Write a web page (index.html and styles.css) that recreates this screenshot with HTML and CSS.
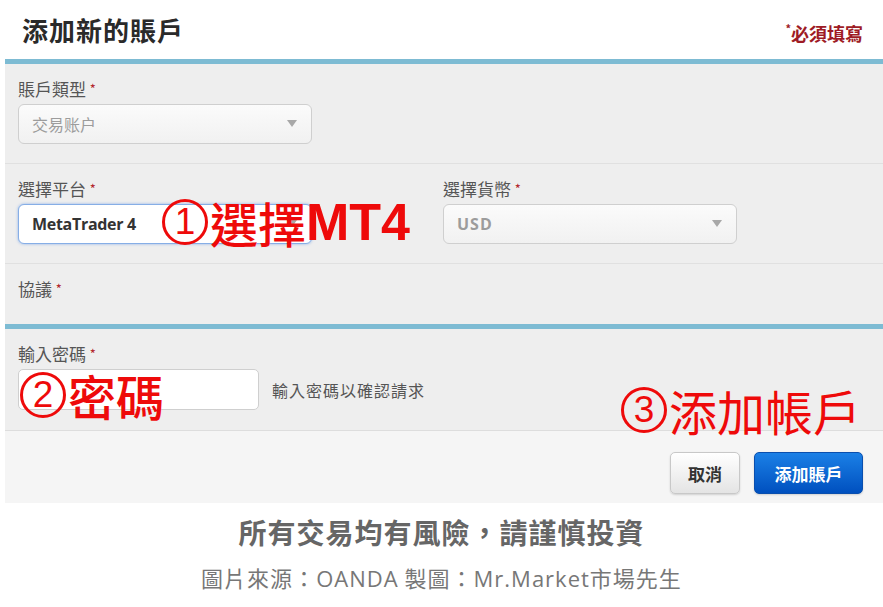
FILE: index.html
```html
<!DOCTYPE html>
<html lang="zh-Hant">
<head>
  <meta charset="UTF-8">
  <title>添加新的賬戶</title>
  <meta name="viewport" content="width=device-width, initial-scale=1.0"/>
  <link rel="stylesheet" href="styles.css">
</head>
<body>

  <div class="modal">
    <div class="modal-header">
      <h2>添加新的賬戶</h2>
      <span class="required-note"><span class="star">*</span>必須填寫</span>
    </div>

    <div class="modal-body">
      <div class="section">
        <label>賬戶類型 <span class="req">*</span></label>
        <div class="select disabled">交易账户<span class="caret"></span></div>
      </div>

      <div class="section cols">
        <div>
          <label>選擇平台 <span class="req">*</span></label>
          <div class="select focus">MetaTrader 4<span class="caret"></span></div>
        </div>
        <div>
          <label>選擇貨幣 <span class="req">*</span></label>
          <div class="select disabled latin">USD<span class="caret"></span></div>
        </div>
      </div>

      <div class="section last">
        <label>協議 <span class="req">*</span></label>
      </div>
    </div>

    <div class="modal-body pw">
      <div class="section last">
        <label>輸入密碼 <span class="req">*</span></label>
        <div class="pw-row">
          <input type="password" class="pw-input">
          <span class="help">輸入密碼以確認請求</span>
        </div>
      </div>
    </div>

    <div class="modal-footer">
      <button class="btn">取消</button>
      <button class="btn primary">添加賬戶</button>
    </div>
  </div>

  <div class="caption">
    <p class="warn">所有交易均有風險，請謹慎投資</p>
    <p class="source">圖片來源：<span class="en">OANDA</span> 製圖：<span class="en">Mr.Market</span>市場先生</p>
  </div>

  <!-- red hand-drawn annotations over the form -->
  <div class="note n1"><span class="circ">1</span>選擇<b>MT4</b></div>
  <div class="note n2"><span class="circ">2</span>密碼</div>
  <div class="note n3"><span class="circ">3</span>添加帳戶</div>

</body>
</html>
```

FILE: styles.css
```css
body {
  margin: 0;
  background: #fff;
  color: #333;
  font-family: "Noto Sans CJK TC", "Liberation Sans", sans-serif;
  position: relative;
  width: 883px;
  height: 607px;
  overflow: hidden;
}
.modal {
  margin-left: 5px;
}
.modal-header {
  height: 59px;
  display: flex;
  align-items: center;
  justify-content: space-between;
  padding: 0 20px 0 17px;
  box-sizing: border-box;
}
.modal-header h2 {
  margin: 0;
  font-size: 26px;
  font-weight: bold;
  color: #2a2a2a;
  letter-spacing: 1px;
}
.required-note {
  color: #9e1b25;
  font-size: 18px;
  font-weight: bold;
  margin-top: 6px;
}
.required-note .star {
  font-size: 11px;
  vertical-align: top;
}
.modal-body {
  background: #eeeeee;
  border-top: 5px solid #7dbbd3;
}
.section {
  padding: 13px 13px 19px;
  border-bottom: 1px solid #e0e0e0;
}
.section.last {
  border-bottom: none;
  padding-bottom: 20px;
}
.cols {
  display: grid;
  grid-template-columns: 425px 294px;
}
label {
  display: block;
  height: 24px;
  line-height: 24px;
  font-size: 17px;
  color: #555;
  margin-bottom: 3px;
}
.req {
  color: #b3282d;
  font-size: 13px;
  vertical-align: top;
}
.select {
  position: relative;
  width: 294px;
  height: 40px;
  box-sizing: border-box;
  border: 1px solid #cfcfcf;
  border-radius: 6px;
  background: linear-gradient(#fbfbfb, #f1f1f1);
  padding-left: 13px;
  line-height: 38px;
  font-size: 16px;
}
.select.disabled {
  color: #9c9c9c;
}
.select.latin {
  font-weight: bold;
  letter-spacing: 1px;
  font-family: "Open Sans", "Liberation Sans", sans-serif;
}
.select.focus {
  background: #fff;
  border-color: #86aee6;
  box-shadow: 0 0 3px rgba(80, 140, 230, 0.6);
  font-weight: bold;
  color: #333;
  font-family: "Open Sans", "Liberation Sans", sans-serif;
  letter-spacing: -0.3px;
}
.caret {
  position: absolute;
  right: 14px;
  top: 15px;
  border-left: 5px solid transparent;
  border-right: 5px solid transparent;
  border-top: 7px solid #a8a8a8;
}
.pw-row {
  display: flex;
  align-items: center;
  gap: 13px;
}
.pw-input {
  width: 241px;
  height: 41px;
  box-sizing: border-box;
  border: 1px solid #cfcfcf;
  border-radius: 5px;
  background: #fff;
  margin: 0;
}
.help {
  font-size: 16px;
  color: #555;
  letter-spacing: 1px;
}
.modal-footer {
  background: #f5f5f5;
  border-top: 1px solid #dddddd;
  height: 73px;
  box-sizing: border-box;
  display: flex;
  justify-content: flex-end;
  align-items: flex-start;
  gap: 14px;
  padding: 21px 20px 0 0;
}
.btn {
  height: 42px;
  padding: 0 17px;
  border: 1px solid #c8c8c8;
  border-radius: 5px;
  background: linear-gradient(#ffffff, #e4e4e4);
  font-family: "Noto Sans CJK TC", sans-serif;
  font-size: 17px;
  font-weight: bold;
  color: #333;
  box-shadow: 0 1px 2px rgba(0, 0, 0, 0.15);
}
.btn.primary {
  width: 109px;
  background: linear-gradient(#1b80e6, #0050bf);
  border-color: #0a4fae;
  color: #fff;
}
.caption {
  text-align: center;
}
.caption p {
  margin: 0;
}
.warn {
  padding-top: 9px;
  font-size: 28px;
  font-weight: bold;
  color: #666;
  letter-spacing: 1px;
}
.source {
  margin-top: 9px !important;
  font-size: 22px;
  color: #777;
  letter-spacing: 1px;
}
.source .en {
  font-family: "Open Sans", "Liberation Sans", sans-serif;
}
.note {
  position: absolute;
  display: flex;
  align-items: center;
  color: #ee0a0a;
  line-height: 1;
  white-space: nowrap;
  font-size: 48px;
}
.note b {
  font-family: "Liberation Sans", sans-serif;
  font-weight: bold;
  font-size: 52px;
}
.circ {
  width: 46px;
  height: 46px;
  box-sizing: border-box;
  border: 3px solid #ee0a0a;
  border-radius: 50%;
  font-family: "Liberation Sans", sans-serif;
  font-size: 37px;
  font-weight: normal;
  line-height: 40px;
  text-align: center;
  margin-right: 2px;
}
.n1 {
  left: 162px;
  top: 196px;
  font-weight: 500;
}
.n2 {
  left: 20px;
  top: 371px;
  font-weight: 500;
}
.n3 {
  left: 621px;
  top: 386px;
  font-weight: 400;
}
```
